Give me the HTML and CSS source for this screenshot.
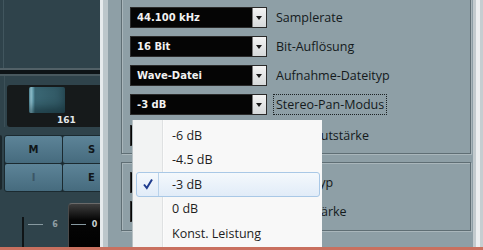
FILE: index.html
```html
<!DOCTYPE html>
<html lang="de">
<head>
    <meta charset="UTF-8">
    <title>Projekt-Einrichtung</title>
    <link rel="stylesheet" href="styles.css">
</head>
<body>

    <div class="screen">
        <div class="mixer">
            <div class="mixer-top"></div>
            <div class="mixer-sep"></div>
            <div class="fader-row">
                <div class="fader-box">
                    <div class="knob"></div>
                    <div class="value">161</div>
                </div>
            </div>
            <div class="btn-row">
                <div class="edge-btn"></div>
                <div class="btn-grid">
                    <div class="btn">M</div>
                    <div class="btn">S</div>
                    <div class="btn dim">I</div>
                    <div class="btn">E</div>
                </div>
            </div>
            <div class="meter-row">
                <div class="meter-line"></div>
                <div class="tick"></div>
                <div class="num">6</div>
                <div class="vol">
                    <div class="tick short"></div>
                    <div class="num">0</div>
                </div>
            </div>
        </div>

        <div class="frame-left"></div>

        <div class="dialog">
            <div class="group first">
                <div class="row">
                    <div class="combo"><span>44.100 kHz</span><i class="arrow"></i></div>
                    <label>Samplerate</label>
                </div>
                <div class="row">
                    <div class="combo"><span>16 Bit</span><i class="arrow"></i></div>
                    <label>Bit-Auflösung</label>
                </div>
                <div class="row">
                    <div class="combo"><span>Wave-Datei</span><i class="arrow"></i></div>
                    <label>Aufnahme-Dateityp</label>
                </div>
                <div class="row">
                    <div class="combo"><span>-3 dB</span><i class="arrow"></i></div>
                    <label class="focus">Stereo-Pan-Modus</label>
                </div>
                <div class="row">
                    <div class="combo"><span></span><i class="arrow"></i></div>
                    <label>Max. Lautstärke</label>
                </div>
            </div>

            <div class="group second">
                <div class="row">
                    <div class="combo"><span></span><i class="arrow"></i></div>
                    <label>Kanal-Typ</label>
                </div>
                <div class="row">
                    <div class="combo"><span></span><i class="arrow"></i></div>
                    <label>Signalstärke</label>
                </div>
            </div>

            <div class="menu">
                <div class="item">-6 dB</div>
                <div class="item">-4.5 dB</div>
                <div class="item checked">
                    <div class="check">
                        <svg width="12" height="12" viewBox="0 0 12 12"><path d="M2 6.5 L4.8 10 L10 1.5" fill="none" stroke="#1f3c8e" stroke-width="2"/></svg>
                    </div>
                    <span>-3 dB</span>
                </div>
                <div class="item">0 dB</div>
                <div class="item">Konst. Leistung</div>
            </div>
        </div>

        <div class="frame-right"></div>
    </div>
    <div class="red-strip"></div>

</body>
</html>
```

FILE: styles.css
```css
body {
    margin: 0;
    width: 483px;
    height: 250px;
    overflow: hidden;
    font-family: "Open Sans", "Noto Sans", sans-serif;
    background-color: #8e9fa6;
}

.screen {
    display: flex;
    height: 247px;
    overflow: hidden;
}

.red-strip {
    height: 3px;
    background-color: #c9705f;
}

/* ---- mixer channel on the left ---- */

.mixer {
    width: 100px;
    flex-shrink: 0;
    background-color: #2f434b;
    overflow: hidden;
}

.mixer-top {
    height: 68px;
    margin-left: 3px;
    border-left: 1px solid #41565e;
}

.mixer-sep {
    height: 4px;
    background-color: #0d1316;
    border-top: 2px solid #526167;
    border-bottom: 2px solid #48585e;
}

.fader-row {
    padding: 9px 0 0 2px;
    margin-left: 4px;
    border-left: 1px solid #3c5058;
}

.fader-box {
    width: 100px;
    height: 42px;
    background-color: #161a1b;
    border-radius: 3px 0 0 3px;
    padding: 2px 0 0 22px;
    box-sizing: border-box;
}

.knob {
    width: 36px;
    height: 26px;
    border-radius: 2px;
    background: linear-gradient(to right, #5c9cb0 0, #a8dbe8 2px, #6aa7b8 4px, #3a6774 6px, #2f5561 100%);
    box-shadow: inset 0 -6px 8px rgba(10, 30, 36, 0.5);
}

.value {
    margin: 2px 0 0 28px;
    font-family: "DejaVu Sans", sans-serif;
    font-weight: bold;
    font-size: 9px;
    color: #e4e8ea;
    line-height: 10px;
}

.btn-row {
    display: flex;
    margin-top: 8px;
}

.edge-btn {
    width: 3px;
    height: 55px;
    background-color: #456778;
    border-right: 2px solid #1b272c;
    border-radius: 0 3px 3px 0;
}

.btn-grid {
    display: grid;
    grid-template-columns: 57px 57px;
    grid-template-rows: 27px 27px;
    gap: 1px;
    margin-left: 2px;
    background-color: #1b2a30;
    border: 1px solid #1b2a30;
    border-radius: 3px;
}

.btn {
    display: flex;
    align-items: center;
    justify-content: center;
    background: linear-gradient(#5d8498, #466b7e);
    font-family: "DejaVu Sans", sans-serif;
    font-weight: bold;
    font-size: 10px;
    color: #101619;
    border-radius: 2px;
}

.btn.dim {
    color: #3c5666;
}

.meter-row {
    display: flex;
    align-items: flex-start;
    margin-top: 11px;
    height: 46px;
}

.meter-line {
    width: 2px;
    height: 32px;
    margin: 14px 0 0 22px;
    background-color: #0f1416;
}

.tick {
    width: 20px;
    height: 1px;
    margin: 21px 0 0 4px;
    background-color: #8799a0;
}

.tick.short {
    width: 15px;
    margin: 20px 0 0 2px;
}

.num {
    font-family: "DejaVu Sans", sans-serif;
    font-weight: bold;
    font-size: 8px;
    color: #8f9ea4;
    margin: 17px 0 0 9px;
}

.vol {
    display: flex;
    align-items: flex-start;
    width: 40px;
    height: 46px;
    margin-left: 10px;
    border-radius: 4px 0 0 0;
    border-top: 1px solid #6a6a6a;
    border-left: 1px solid #4a4a4a;
    background: linear-gradient(#3e3e3e, #050505 16px, #000);
}

.vol .num {
    margin: 16px 0 0 6px;
    color: #c8d0d3;
}

/* ---- window frame ---- */

.frame-left {
    width: 3px;
    flex-shrink: 0;
    background-color: #e6eaec;
    border-right: 5px solid #bcc6ca;
}

.frame-right {
    width: 4px;
    flex-shrink: 0;
    background-color: #eceff0;
    border-left: 3px solid #c3cbce;
    border-right: 3px solid #c6ced1;
}

/* ---- dialog ---- */

.dialog {
    position: relative;
    flex: 1;
    background-color: #8e9fa6;
}

.group {
    width: 340px;
    margin-left: 13px;
    border: 1px solid #5f6e74;
    box-shadow: 1px 1px 0 #a9b6bb, inset 1px 1px 0 #a9b6bb;
    display: flex;
    flex-direction: column;
    gap: 8px;
}

.group.first {
    margin-top: -10px;
    padding: 16px 0 7px 8px;
}

.group.second {
    margin-top: 8px;
    padding: 9px 0 8px 8px;
}

.group.first .row:last-child {
    margin-top: 2px;
}

.row {
    display: flex;
    align-items: center;
    height: 21px;
}

.combo {
    display: flex;
    width: 137px;
    height: 21px;
    background-color: #050505;
    box-sizing: border-box;
    border: 1px solid #2a2a2a;
}

.combo span {
    flex: 1;
    padding-left: 6px;
    font-family: "DejaVu Sans", sans-serif;
    font-weight: bold;
    font-size: 10px;
    line-height: 19px;
    color: #f2f2f2;
}

.arrow {
    position: relative;
    width: 13px;
    background: linear-gradient(#f4f4f4, #d6d9da);
    border-left: 1px solid #7c7c7c;
}

.arrow::after {
    content: "";
    position: absolute;
    left: 3px;
    top: 8px;
    border-left: 3.5px solid transparent;
    border-right: 3.5px solid transparent;
    border-top: 4px solid #1a1a1a;
}

label {
    margin-left: 6px;
    padding: 1px 2px;
    font-size: 12.5px;
    color: #141a1c;
    border: 1px solid transparent;
}

label.focus {
    border: 1px dotted #1c2224;
    height: 19px;
    line-height: 19px;
    padding: 0 2px;
}

/* ---- drop-down menu ---- */

.menu {
    position: absolute;
    left: 25px;
    top: 120px;
    width: 189px;
    height: 140px;
    padding-top: 3px;
    box-sizing: border-box;
    background: linear-gradient(to right, #f2f3f3 29px, #dfe1e2 29px, #dfe1e2 30px, #ffffff 30px, #f8f8f8 31px);
    box-shadow: -1px 0 0 #b7c0c3;
}

.item {
    display: flex;
    align-items: center;
    height: 24.5px;
    box-sizing: border-box;
    padding-left: 39px;
    font-size: 12.5px;
    color: #1e1e1e;
}

.item.checked {
    margin: 0 2px 0 3px;
    padding-left: 0;
    border: 1px solid #a9c8e6;
    border-radius: 3px;
    background: linear-gradient(#f4f8fc, #e1ecf8);
}

.check {
    width: 21px;
    height: 100%;
    display: flex;
    align-items: center;
    justify-content: center;
    border-right: 1px solid #b9d2ea;
    margin-right: 13px;
}
```
